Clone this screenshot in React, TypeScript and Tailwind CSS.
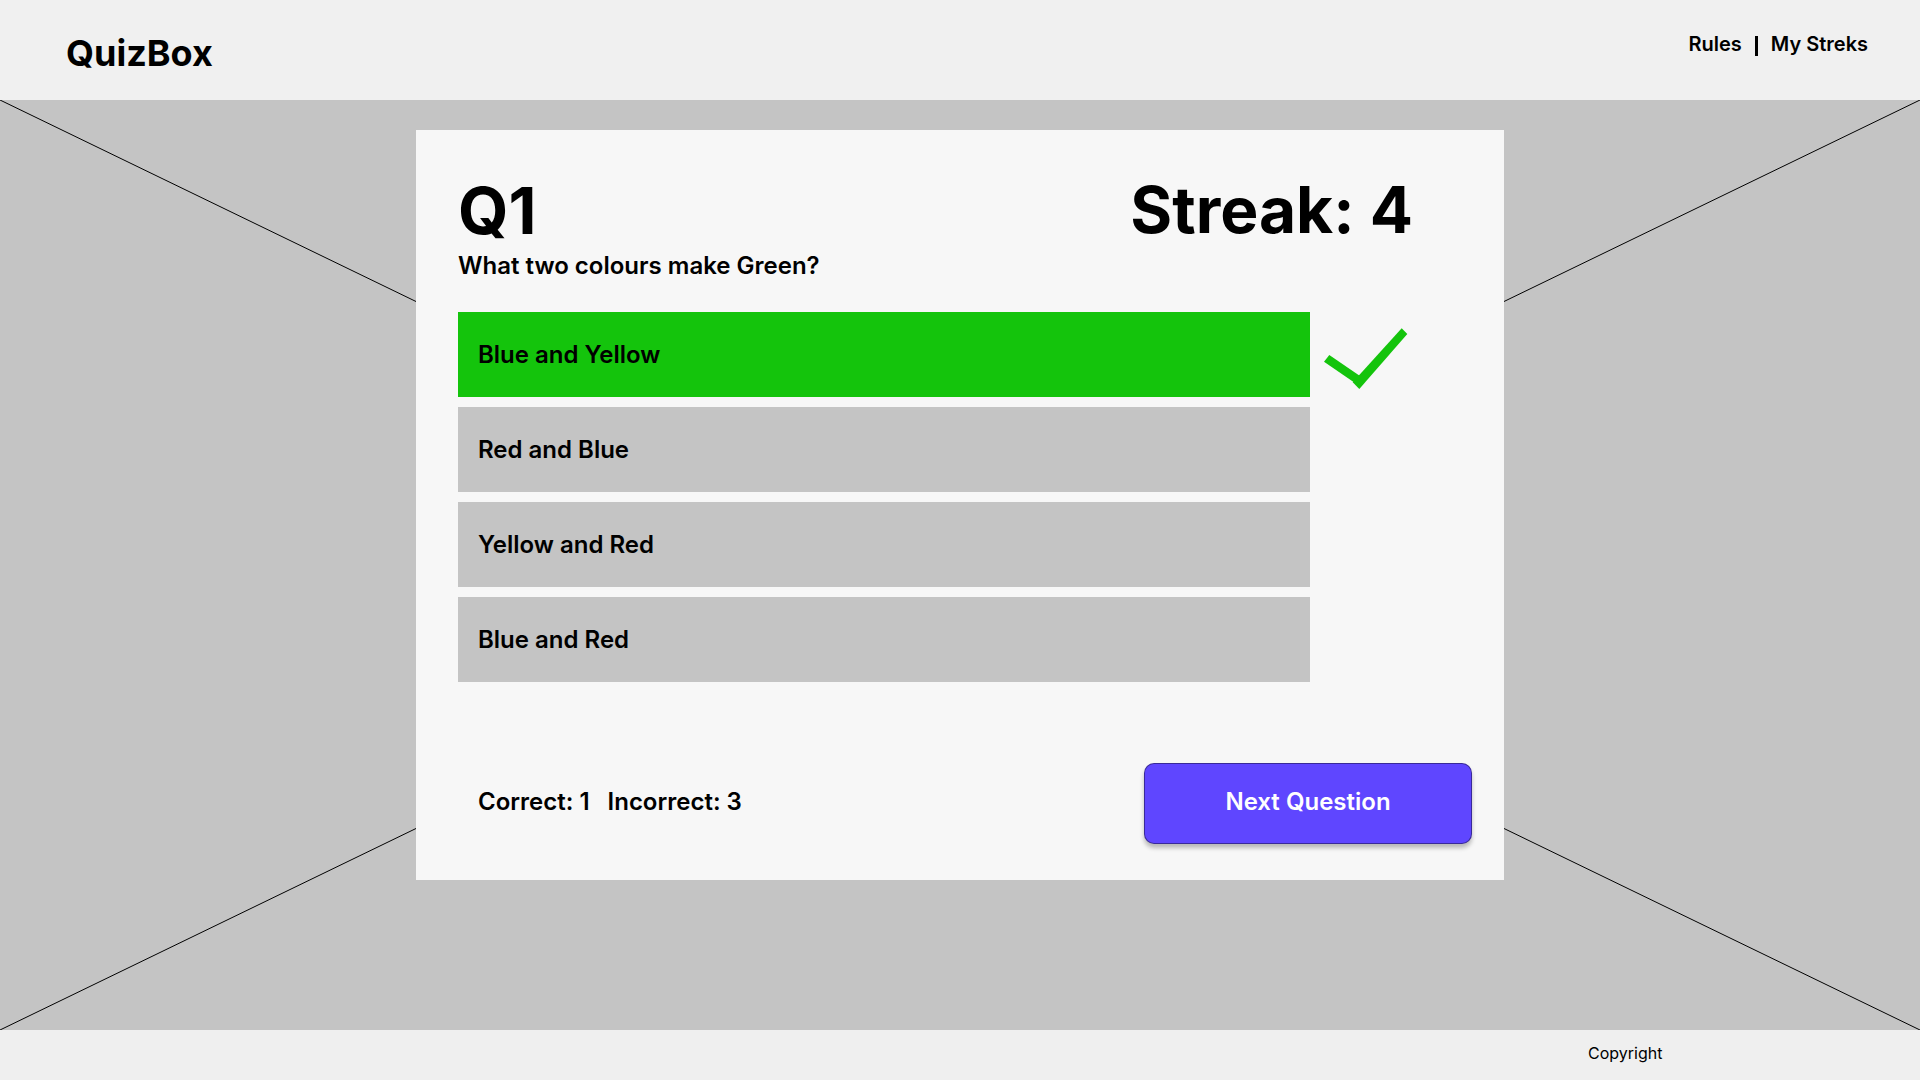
import React from "react";

const answers = [
  { text: "Blue and Yellow", correct: true },
  { text: "Red and Blue", correct: false },
  { text: "Yellow and Red", correct: false },
  { text: "Blue and Red", correct: false },
];

function Check() {
  return (
    <svg width="90" height="70" viewBox="0 0 90 70" className="shrink-0 ml-[10px] mt-[12px]">
      <polygon points="32.7,58.3 81.7,4.3 87.3,10 39.3,65" fill="#14c40c" />
      <polygon points="4,37.7 9.3,31 40,52 35,59" fill="#14c40c" />
    </svg>
  );
}

export default function App() {
  return (
    <div className="w-[1920px] h-[1080px] flex flex-col font-['Inter',sans-serif] text-black overflow-hidden">
      <header className="h-[100px] shrink-0 bg-[#f0f0f0] flex items-start justify-between pl-[66px] pr-[52px]">
        <div className="text-[36px] font-bold leading-none mt-[35px]">QuizBox</div>
        <nav className="flex items-start text-[20px] font-semibold leading-none mt-[34px]">
          <span>Rules</span>
          <span className="mx-[13px] mt-[2px] w-[3px] h-[20px] bg-black inline-block" />
          <span>My Streks</span>
        </nav>
      </header>

      <main className="relative flex-1 bg-[#c4c4c4] flex justify-center pt-[30px]">
        <svg
          className="absolute inset-0 w-full h-full"
          viewBox="0 0 1920 930"
          preserveAspectRatio="none"
        >
          <line x1="0" y1="0" x2="1920" y2="930" stroke="#000" strokeWidth="1" />
          <line x1="1920" y1="0" x2="0" y2="930" stroke="#000" strokeWidth="1" />
        </svg>

        <section className="relative w-[1088px] h-[750px] bg-[#f7f7f7] flex flex-col pl-[42px] pr-[32px] pt-[48px] pb-[36px]">
          <div className="w-[955px] flex items-start justify-between">
            <h1 className="text-[65px] font-bold leading-none">Q1</h1>
            <div className="text-[64px] font-bold leading-none">Streak: 4</div>
          </div>
          <p className="text-[24px] font-semibold leading-none mt-[11px]">What two colours make Green?</p>

          <div className="flex items-start mt-[34px]">
            <div className="w-[852px] flex flex-col gap-[10px]">
              {answers.map((a) => (
                <button
                  key={a.text}
                  className={
                    "h-[85px] w-full flex items-center pl-[20px] text-left text-[24px] font-semibold leading-none " +
                    (a.correct ? "bg-[#14c40c]" : "bg-[#c4c4c4]")
                  }
                >
                  {a.text}
                </button>
              ))}
            </div>
            <Check />
          </div>

          <div className="mt-auto flex items-center justify-between pl-[20px]">
            <div className="flex items-center gap-[18px] text-[24px] font-semibold leading-none mb-[4px]">
              <span>Correct: 1</span>
              <span>Incorrect: 3</span>
            </div>
            <button className="w-[328px] h-[81px] pb-[4px] rounded-[10px] bg-[#5f46ff] border border-[#00000066] shadow-[0_4px_4px_rgba(0,0,0,0.25)] text-white text-[24px] font-semibold leading-none">
              Next Question
            </button>
          </div>
        </section>
      </main>

      <footer className="h-[50px] shrink-0 bg-[#efefef] flex items-center pl-[1588px] pb-[5px]">
        <span className="text-[16px] leading-none">Copyright</span>
      </footer>
    </div>
  );
}
